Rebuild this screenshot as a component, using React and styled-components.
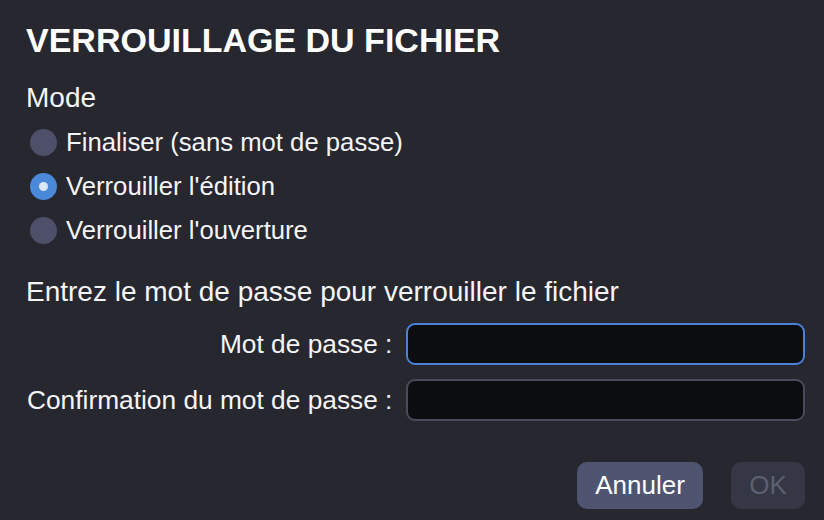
import styled, { createGlobalStyle } from "styled-components";
import { useState } from "react";

const GlobalStyle = createGlobalStyle`
  html, body {
    margin: 0;
    padding: 0;
    background: #27272f;
  }
  body {
    font-family: "Liberation Sans", Arial, Helvetica, sans-serif;
    color: #f5f5f7;
  }
`;

const Dialog = styled.div`
  box-sizing: border-box;
  width: 824px;
  height: 520px;
  padding: 20px 19px 0 26px;
  display: flex;
  flex-direction: column;
  background: #27272f;
  overflow: hidden;
`;

const Title = styled.h1`
  margin: 0;
  font-size: 34px;
  line-height: 40px;
  font-weight: 700;
  color: #ffffff;
`;

const Legend = styled.div`
  font-size: 28px;
  line-height: 32px;
  margin-top: ${(p) => p.$top}px;
`;

const RadioList = styled.div`
  display: flex;
  flex-direction: column;
  margin-top: 6px;
`;

const RadioRow = styled.label`
  display: flex;
  align-items: center;
  gap: 9px;
  height: 44px;
  padding-left: 4px;
  font-size: 25.7px;
  cursor: pointer;
`;

const RadioInput = styled.input`
  appearance: none;
  margin: 0;
  width: 27px;
  height: 27px;
  border-radius: 50%;
  background: #4d5068;
  display: grid;
  place-items: center;
  cursor: pointer;

  &:checked {
    background: #4a88da;
  }
  &:checked::after {
    content: "";
    width: 9px;
    height: 9px;
    border-radius: 50%;
    background: #dde6f3;
  }
`;

const FieldGrid = styled.div`
  display: grid;
  grid-template-columns: auto 1fr;
  column-gap: 14px;
  row-gap: 14px;
  align-items: center;
  margin-top: 15px;
  padding-left: 1px;
`;

const FieldLabel = styled.label`
  font-size: 26.3px;
  line-height: 30px;
  text-align: right;
  white-space: nowrap;
`;

const PasswordInput = styled.input`
  box-sizing: border-box;
  height: 42px;
  width: 100%;
  margin: 0;
  border-radius: 9px;
  border: 2px solid ${(p) => (p.$focused ? "#4a80d9" : "#4a4b58")};
  background: #0c0d10;
  color: #ffffff;
  font-size: 22px;
  padding: 0 10px;
  outline: none;
`;

const Actions = styled.div`
  display: flex;
  justify-content: flex-end;
  gap: 28px;
  margin-top: 41px;
`;

const Button = styled.button`
  height: 47px;
  padding: 0 18px;
  min-width: ${(p) => (p.$disabled ? 74 : 126)}px;
  border: none;
  border-radius: 10px;
  font-family: inherit;
  font-size: 26px;
  background: ${(p) => (p.$disabled ? "#353744" : "#4f5570")};
  color: ${(p) => (p.$disabled ? "#5c6072" : "#ffffff")};
  cursor: ${(p) => (p.$disabled ? "default" : "pointer")};
`;

const MODES = [
  { id: "final", label: "Finaliser (sans mot de passe)" },
  { id: "edit", label: "Verrouiller l'édition" },
  { id: "open", label: "Verrouiller l'ouverture" },
];

export default function App() {
  const [mode, setMode] = useState("edit");

  return (
    <>
      <GlobalStyle />
      <Dialog>
        <Title>VERROUILLAGE DU FICHIER</Title>
        <Legend $top={22}>Mode</Legend>
        <RadioList>
          {MODES.map((m) => (
            <RadioRow key={m.id}>
              <RadioInput
                type="radio"
                name="mode"
                checked={mode === m.id}
                onChange={() => setMode(m.id)}
              />
              {m.label}
            </RadioRow>
          ))}
        </RadioList>
        <Legend $top={24}>Entrez le mot de passe pour verrouiller le fichier</Legend>
        <FieldGrid>
          <FieldLabel htmlFor="pw">Mot de passe :</FieldLabel>
          <PasswordInput id="pw" type="password" $focused />
          <FieldLabel htmlFor="pw2">Confirmation du mot de passe :</FieldLabel>
          <PasswordInput id="pw2" type="password" />
        </FieldGrid>
        <Actions>
          <Button>Annuler</Button>
          <Button $disabled disabled>
            OK
          </Button>
        </Actions>
      </Dialog>
    </>
  );
}
